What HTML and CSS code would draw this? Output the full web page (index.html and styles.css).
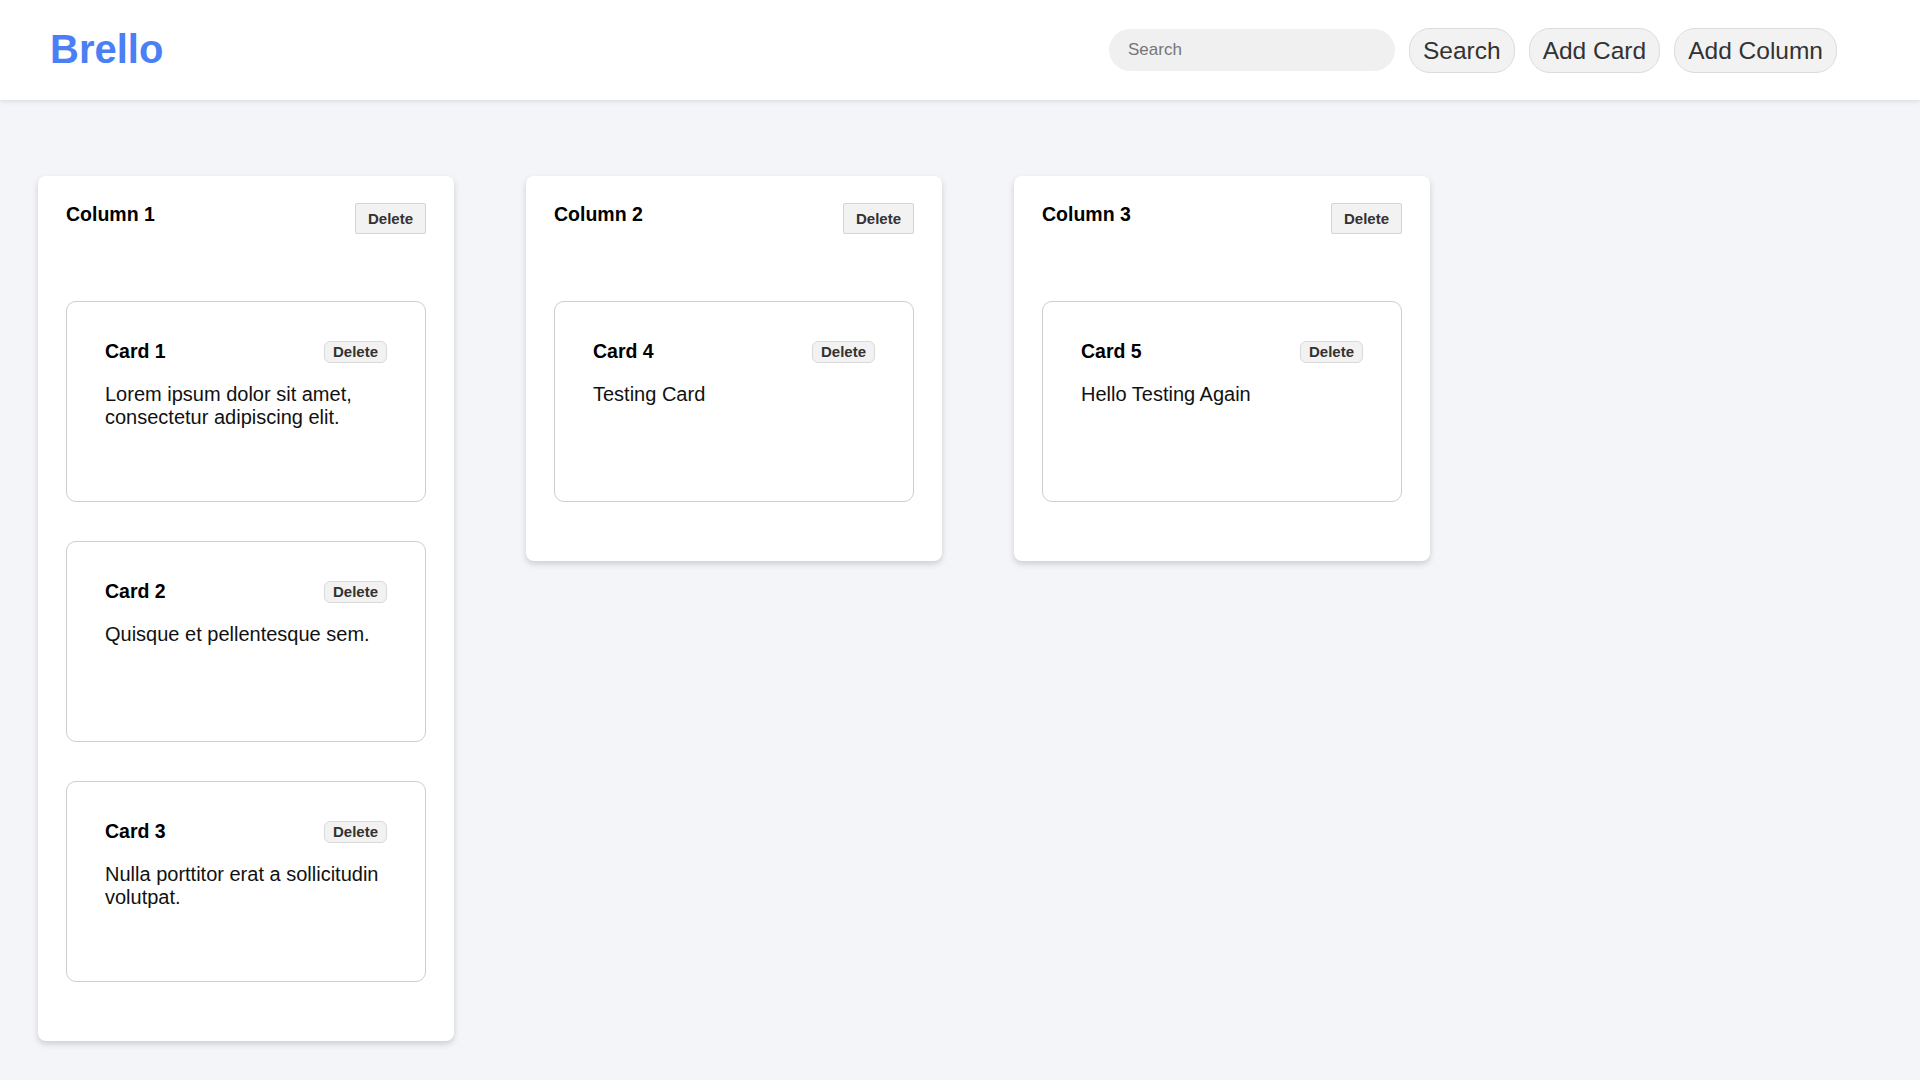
FILE: index.html
```html
<!DOCTYPE html>
<html lang="en">
<head>
<meta charset="utf-8">
<title>Brello</title>
<link rel="stylesheet" href="styles.css">
</head>
<body>
<header class="topbar">
  <div class="logo">Brello</div>
  <div class="actions">
    <input class="search-input" type="text" placeholder="Search">
    <button class="pill">Search</button>
    <button class="pill">Add Card</button>
    <button class="pill">Add Column</button>
  </div>
</header>
<main class="board">
  <section class="column">
    <div class="column-head">
      <h2 class="column-title">Column 1</h2>
      <button class="col-delete">Delete</button>
    </div>
    <div class="cards">
      <article class="card">
        <div class="card-head">
          <h3 class="card-title">Card 1</h3>
          <button class="card-delete">Delete</button>
        </div>
        <p class="card-text">Lorem ipsum dolor sit amet, consectetur adipiscing elit.</p>
      </article>
      <article class="card">
        <div class="card-head">
          <h3 class="card-title">Card 2</h3>
          <button class="card-delete">Delete</button>
        </div>
        <p class="card-text">Quisque et pellentesque sem.</p>
      </article>
      <article class="card">
        <div class="card-head">
          <h3 class="card-title">Card 3</h3>
          <button class="card-delete">Delete</button>
        </div>
        <p class="card-text">Nulla porttitor erat a sollicitudin volutpat.</p>
      </article>
    </div>
  </section>
  <section class="column">
    <div class="column-head">
      <h2 class="column-title">Column 2</h2>
      <button class="col-delete">Delete</button>
    </div>
    <div class="cards">
      <article class="card">
        <div class="card-head">
          <h3 class="card-title">Card 4</h3>
          <button class="card-delete">Delete</button>
        </div>
        <p class="card-text">Testing Card</p>
      </article>
    </div>
  </section>
  <section class="column">
    <div class="column-head">
      <h2 class="column-title">Column 3</h2>
      <button class="col-delete">Delete</button>
    </div>
    <div class="cards">
      <article class="card">
        <div class="card-head">
          <h3 class="card-title">Card 5</h3>
          <button class="card-delete">Delete</button>
        </div>
        <p class="card-text">Hello Testing Again</p>
      </article>
    </div>
  </section>
</main>
</body>
</html>
```
FILE: styles.css
```css
* { box-sizing: border-box; }

html, body {
  margin: 0;
  padding: 0;
}

body {
  background: #f4f5f9;
  font-family: "Liberation Sans", Arial, sans-serif;
  color: #111;
}

.topbar {
  height: 100px;
  background: #ffffff;
  box-shadow: 0 2px 4px rgba(0, 0, 0, 0.09);
  display: flex;
  align-items: center;
  justify-content: space-between;
  padding: 0 83px 0 50px;
  position: relative;
}

.logo {
  font-size: 40px;
  font-weight: 700;
  color: #4a7ff6;
  line-height: 1;
  margin-top: -3px;
}

.actions {
  display: flex;
  align-items: center;
  gap: 14px;
}

.search-input {
  width: 286px;
  height: 42px;
  border: none;
  border-radius: 21px;
  background: #f0f0f0;
  padding: 0 19px;
  font-family: "Liberation Sans", Arial, sans-serif;
  font-size: 17px;
  color: #333;
  outline: none;
}

.search-input::placeholder {
  color: #767676;
}

.pill {
  font-family: "Liberation Sans", Arial, sans-serif;
  font-size: 24.5px;
  line-height: 27px;
  padding: 8px 13px;
  border: 1px solid #dcdcdc;
  border-radius: 21px;
  background: #f2f2f2;
  color: #333;
  cursor: pointer;
}

.board {
  display: flex;
  align-items: flex-start;
  gap: 72px;
  padding: 76px 38px 60px;
}

.column {
  width: 416px;
  background: #ffffff;
  border-radius: 8px;
  box-shadow: 0 3px 6px rgba(0, 0, 0, 0.16);
  padding: 27px 28px 59px;
}

.column-head {
  display: flex;
  justify-content: space-between;
  align-items: flex-start;
  margin-bottom: 67px;
}

.column-title {
  margin: 0;
  font-size: 19.5px;
  font-weight: 700;
  color: #000;
}

.col-delete {
  font-family: "Liberation Sans", Arial, sans-serif;
  font-size: 15px;
  font-weight: 700;
  line-height: 17px;
  padding: 6px 12px;
  border: 1px solid #d4d4d4;
  border-radius: 2px;
  background: #f2f2f2;
  color: #333;
  cursor: pointer;
}

.cards {
  display: flex;
  flex-direction: column;
  gap: 39px;
}

.card {
  height: 201px;
  border: 1px solid #cdcdd2;
  border-radius: 10px;
  background: #ffffff;
  padding: 38px;
}

.card-head {
  display: flex;
  justify-content: space-between;
  align-items: center;
  margin-bottom: 20px;
}

.card-title {
  margin: 0;
  font-size: 19.5px;
  font-weight: 700;
  color: #000;
}

.card-delete {
  font-family: "Liberation Sans", Arial, sans-serif;
  font-size: 15px;
  font-weight: 700;
  line-height: 18px;
  padding: 1px 8px;
  border: 1px solid #dadada;
  border-radius: 6px;
  background: #f2f2f2;
  color: #333;
  cursor: pointer;
}

.card-text {
  margin: 0;
  font-size: 20px;
  color: #111;
}
```
